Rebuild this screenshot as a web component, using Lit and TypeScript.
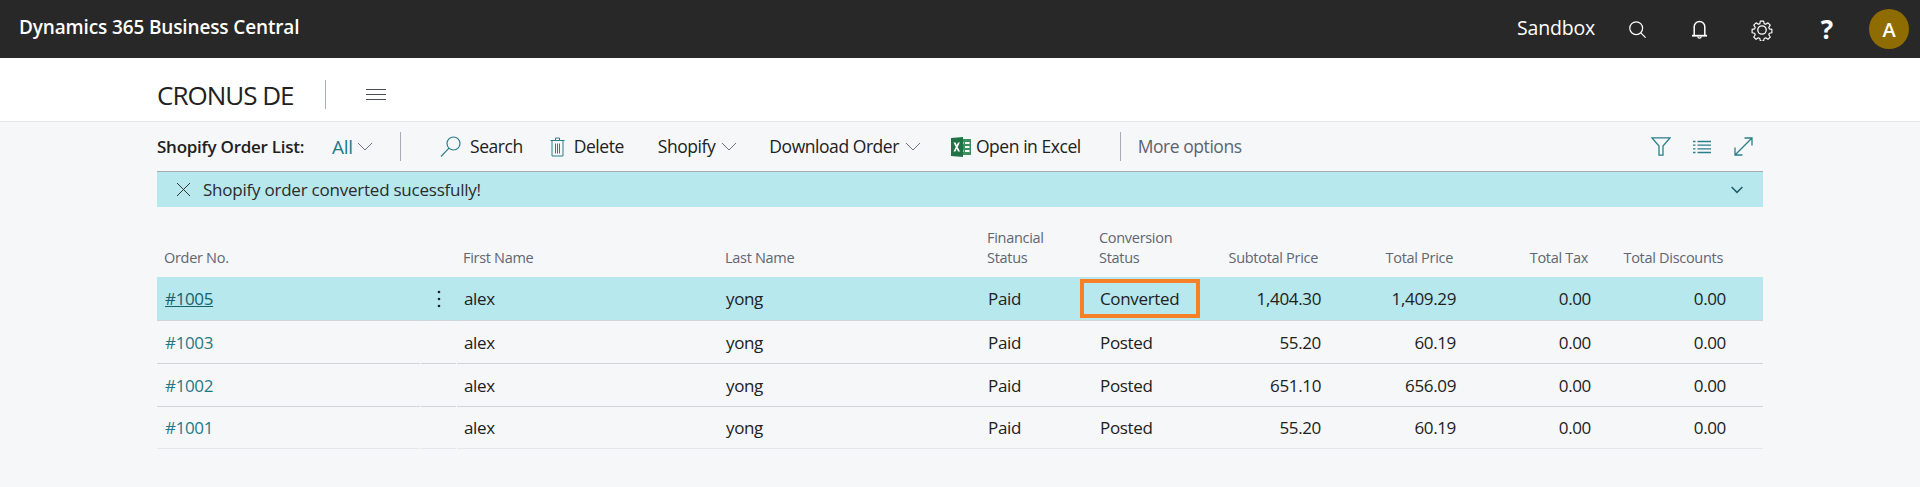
import { LitElement, html, css } from "lit";
import { customElement } from "lit/decorators.js";

const rows = [
  ["#1005", "alex", "yong", "Paid", "Converted", "1,404.30", "1,409.29", "0.00", "0.00"],
  ["#1003", "alex", "yong", "Paid", "Posted", "55.20", "60.19", "0.00", "0.00"],
  ["#1002", "alex", "yong", "Paid", "Posted", "651.10", "656.09", "0.00", "0.00"],
  ["#1001", "alex", "yong", "Paid", "Posted", "55.20", "60.19", "0.00", "0.00"],
];

const chevron = html`<svg class="chev" width="16" height="9" viewBox="0 0 16 9" fill="none" stroke="#6d7480" stroke-width="1"><path d="M1 1l7 7 7-7"/></svg>`;

@customElement("app-root")
export class AppRoot extends LitElement {
  static styles = css`
    :host { display: block; width: 1920px; height: 487px; overflow: hidden; background: #f6f7f9; font-family: "Open Sans", "Noto Sans", sans-serif; color: #212121; }
    * { box-sizing: border-box; }
    .top { height: 58px; background: #282828; color: #fff; display: flex; align-items: center; padding: 0 11px 0 19px; }
    .brand { font-size: 19px; font-weight: 600; letter-spacing: -0.14px; flex: 1; margin-top: -4px; }
    .sandbox { font-size: 19.5px; letter-spacing: -0.2px; margin-top: -4px; }
    .ticon { display: flex; justify-content: center; align-items: center; }
    .ticon.s { margin-left: 34px; margin-top: 1px; }
    .ticon.b { margin-left: 46px; margin-top: 1px; }
    .ticon.g { margin-left: 44px; margin-top: 1px; }
    .help { font-size: 26px; font-weight: 700; width: 14px; margin-left: 47px; margin-right: 35px; line-height: 1; text-align: center; display: flex; justify-content: center; }
    .avatar { width: 40px; height: 40px; border-radius: 50%; background: #8f6c00; font-size: 20px; font-weight: 600; display: flex; align-items: center; justify-content: center; }
    .head { height: 64px; background: #fff; border-bottom: 1px solid #e6e7ea; display: flex; align-items: center; padding: 9px 0 0 157px; }
    .company { font-size: 26px; font-weight: 500; letter-spacing: -1px; color: #212121; width: 168px; margin-top: 1px; }
    .vline { width: 1px; height: 29px; background: #a8adb3; }
    .burger { margin-left: 40px; display: block; }
    .tool { height: 50px; margin: 0 157px; display: flex; align-items: center; font-size: 17.5px; letter-spacing: -0.45px; border-bottom: 1px solid #a6abb2; }
    .tool .title { font-weight: 600; letter-spacing: -0.25px; width: 175px; font-size: 17px; }
    .tool .all { color: #1e7a85; font-size: 19px; letter-spacing: -0.3px; font-weight: 500; margin-right: 5px; width: 20px; }
    .tool .sep { width: 1px; height: 29px; background: #a8adb3; }
    .act { display: flex; align-items: center; white-space: nowrap; }
    .act svg.ic { display: block; }
    .act span.x { margin-bottom: 2px; }
    .gap6 { margin-left: 6px; display: flex; }
    .end { margin-left: auto; display: flex; align-items: center; padding-right: 10px; }
    .muted { color: #5c6470; margin-bottom: 2px; }
    .a1 { margin-left: 27px; }
    .a2 { margin-left: 39px; }
    .a3 { margin-left: 27px; }
    .a4 { margin-left: 34px; }
    .a5 { margin-left: 32px; }
    .a6 { margin-left: 30px; }
    .a7 { margin-left: 39px; }
    .a8 { margin-left: 17px; }
    .t1 { margin-left: 9px; }
    .t2 { margin-left: 9px; }
    .t3 { margin-left: 5px; }
    .e2 { margin-left: 22px; }
    .e3 { margin-left: 23px; }
    .msg { margin: 0 157px; height: 35px; background: #b7e8ed; display: flex; align-items: center; padding-left: 19px; padding-right: 20px; font-size: 17px; letter-spacing: -0.23px; color: #2b2b2b; }
    .msg span { margin-left: 12px; flex: 1; }
    .table { margin: 0 157px; }
    .grid { display: grid; grid-template-columns: 263px 37px 262px 262px 112px 107px 126px 135px 135px 135px 32px; }
    .hdr { height: 70px; font-size: 14.5px; color: #5f6672; line-height: 20px; letter-spacing: -0.3px; }
    .hdr > div { align-self: end; padding: 0 0 9px 6px; }
    .hdr > div:first-child { padding-left: 7px; }
    .hdr > div.n { text-align: right; padding: 0 8px 9px 0; }
    .row { height: 43px; font-size: 17px; letter-spacing: -0.35px; color: #212121; }
    .row.sel { background: #b7e8ed; height: 44px; }
    .row > div { border-bottom: 1px solid #d2d3d8; display: flex; align-items: center; padding-left: 7px; position: relative; }
    .row:last-child { height: 42px; }
    .row:last-child > div { border-bottom-color: #e6e7ea; }
    .row > div.n { justify-content: flex-end; padding: 0 5px 0 0; }
    .row > div.link { color: #1e7a85; padding-left: 8px; }
    .row.sel > div.link { color: #17616b; text-decoration: underline; }
    .row > div.menu { margin: 0 1px; padding: 0; justify-content: center; }
    .row > div.tail { padding: 0; }
    .mark { position: absolute; left: -13px; top: 2px; width: 120px; height: 39px; border: 4px solid #f68026; pointer-events: none; }
  `;

  private row(r: string[], i: number) {
    return html`<div class="grid row ${i === 0 ? "sel" : ""}">
      <div class="link">${r[0]}</div>
      <div class="menu">${i === 0 ? html`<svg width="4" height="18" viewBox="0 0 4 18" fill="#212121"><circle cx="2" cy="2" r="1.3"/><circle cx="2" cy="9" r="1.3"/><circle cx="2" cy="16" r="1.3"/></svg>` : ""}</div>
      <div>${r[1]}</div>
      <div>${r[2]}</div>
      <div>${r[3]}</div>
      <div>${r[4]}${i === 0 ? html`<div class="mark"></div>` : ""}</div>
      <div class="n">${r[5]}</div>
      <div class="n">${r[6]}</div>
      <div class="n">${r[7]}</div>
      <div class="n">${r[8]}</div>
      <div class="tail"></div>
    </div>`;
  }

  render() {
    return html`
      <div class="top">
        <div class="brand">Dynamics 365 Business Central</div>
        <div class="sandbox">Sandbox</div>
        <div class="ticon s"><svg width="17" height="17" viewBox="0 0 17 17" fill="none" stroke="#fff" stroke-width="1.2"><circle cx="7.2" cy="7.2" r="6.4"/><path d="M11.8 11.8l4.8 4.8"/></svg></div>
        <div class="ticon b"><svg width="15" height="19" viewBox="0 0 15 19" fill="none" stroke="#fff" stroke-width="1.5"><path d="M2.2 15V6.8a5.3 5.3 0 0 1 10.6 0V15"/><path d="M0 15.7h15" stroke-width="1.8"/><path d="M5.8 16.5a1.7 1.7 0 0 0 3.4 0" stroke-width="1.2"/></svg></div>
        <div class="ticon g"><svg width="22" height="22" viewBox="0 0 24 24" fill="none" stroke="#fff" stroke-width="1.4"><circle cx="12" cy="12" r="4.6"/><path d="M10 1.2h4l.6 3.1 1.9.8 2.7-1.8 2.8 2.8-1.8 2.7.8 1.9 3 .6v4l-3 .6-.8 1.9 1.8 2.7-2.8 2.8-2.7-1.8-1.9.8-.6 3h-4l-.6-3-1.9-.8-2.7 1.8-2.8-2.8 1.8-2.7-.8-1.9-3-.6v-4l3-.6.8-1.9-1.8-2.7 2.8-2.8 2.7 1.8 1.9-.8z" transform="translate(1.2 1.2) scale(.9)" stroke-linejoin="round"/></svg></div>
        <div class="help">?</div>
        <div class="avatar">A</div>
      </div>
      <div class="head">
        <div class="company">CRONUS DE</div>
        <div class="vline"></div>
        <svg class="burger" width="20" height="12" viewBox="0 0 20 12" stroke="#4a4f57" stroke-width="1"><path d="M0 1.5h20M0 6.5h20M0 11.5h20"/></svg>
      </div>
      <div class="tool">
        <div class="title">Shopify Order List:</div>
        <div class="all">All</div>${chevron}
        <div class="sep a1"></div>
        <div class="act a2">
          <svg class="ic" width="21" height="21" viewBox="0 0 21 21" fill="none" stroke="#2b7f8a" stroke-width="1.2"><circle cx="13.5" cy="7.5" r="6.5"/><path d="M9 12.2L1 20.5"/></svg>
          <span class="t1 x">Search</span>
        </div>
        <div class="act a3">
          <svg class="ic" width="15" height="20" viewBox="0 0 15 20" fill="none" stroke="#2b7f8a" stroke-width="1"><path d="M.5 3.5h14M5.5 3.5V1h4v2.5M2 3.5v15.5h11V3.5M5.5 6.5v10M7.5 6.5v10M9.5 6.5v10"/></svg>
          <span class="t2 x">Delete</span>
        </div>
        <div class="act a4"><span class="x">Shopify</span><span class="gap6">${chevron}</span></div>
        <div class="act a5"><span class="x">Download Order</span><span class="gap6">${chevron}</span></div>
        <div class="act a6">
          <svg class="ic" width="20" height="20" viewBox="0 0 20 20"><rect x="8" y="2" width="12" height="16" fill="#3f8f5f"/><path d="M9.5 5h3v2h-3zM14 5h4.5v2H14zM14 9h4.5v2H14zM14 13h4.5v2H14zM9.5 13h3v2h-3z" fill="#fff"/><path d="M0 1l12-1v20L0 19z" fill="#217346"/><path d="M2.5 5.5h2l1.2 2.6L7 5.5h1.9L6.7 9.9 9 14.5H7L5.7 11.7l-1.3 2.8H2.5l2.3-4.6z" fill="#fff"/></svg>
          <span class="t3 x">Open in Excel</span>
        </div>
        <div class="sep a7"></div>
        <div class="act muted a8">More options</div>
        <div class="end">
          <svg width="20" height="19" viewBox="0 0 20 19" fill="none" stroke="#2b7f8a" stroke-width="1.3"><path d="M.8 .8h18.4L12 9v9.2H8V9z"/></svg>
          <svg class="e2" width="18" height="14" viewBox="0 0 18 14" stroke="#2b7f8a" stroke-width="1.3"><path d="M0 1.5h2.5M4.5 1.5H18M0 5.2h2.5M4.5 5.2H18M0 8.9h2.5M4.5 8.9H18M0 12.5h2.5M4.5 12.5H18"/></svg>
          <svg class="e3" width="19" height="19" viewBox="0 0 19 19" fill="none" stroke="#2b7f8a" stroke-width="1.3"><path d="M1 18L18 1M10.5 1H18V8.5M1 10.5V18H8.5"/></svg>
        </div>
      </div>
      <div class="msg">
        <svg width="15" height="15" viewBox="0 0 15 15" stroke="#333" stroke-width="1"><path d="M1 1l13 13M14 1L1 14"/></svg>
        <span>Shopify order converted sucessfully!</span>
        <svg width="12" height="8" viewBox="0 0 12 8" fill="none" stroke="#1f5f68" stroke-width="1.5"><path d="M.6 1l5.4 5.4L11.4 1"/></svg>
      </div>
      <div class="table">
        <div class="grid hdr">
          <div>Order No.</div><div></div>
          <div>First Name</div>
          <div>Last Name</div>
          <div>Financial<br />Status</div>
          <div>Conversion<br />Status</div>
          <div class="n">Subtotal Price</div>
          <div class="n">Total Price</div>
          <div class="n">Total Tax</div>
          <div class="n">Total Discounts</div>
          <div></div>
        </div>
        ${rows.map((r, i) => this.row(r, i))}
      </div>
    `;
  }
}
